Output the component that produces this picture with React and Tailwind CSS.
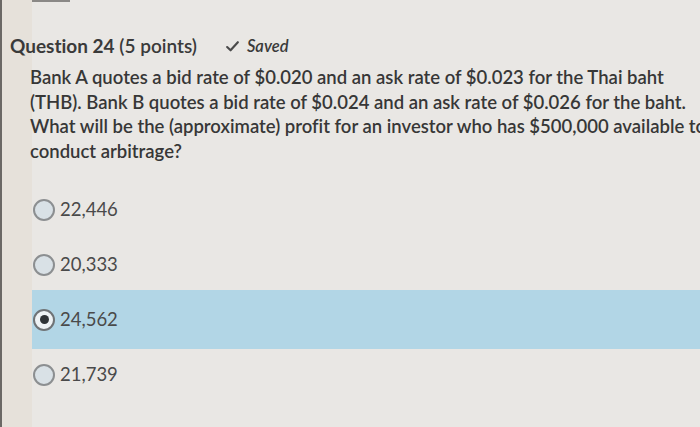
import React from 'react';

const options = [
  { label: '22,446', selected: false },
  { label: '20,333', selected: false },
  { label: '24,562', selected: true },
  { label: '21,739', selected: false },
];

function Radio({ selected }) {
  if (selected) {
    return (
      <span className="w-[22px] h-[22px] rounded-full border-2 border-[#6f7376] bg-[#eef2f4] flex items-center justify-center">
        <span className="w-[9px] h-[9px] rounded-full bg-[#2f3336]" />
      </span>
    );
  }
  return <span className="w-[22px] h-[22px] rounded-full border-2 border-[#8c8f91] bg-[#d9e1e6]" />;
}

export default function App() {
  return (
    <div className="w-[700px] h-[427px] overflow-hidden flex bg-[#e9e7e4] font-['Lato',sans-serif] text-[#363636] [font-variant-ligatures:none]">
      {/* left edge */}
      <div className="w-[2px] bg-[#6b6865]" />
      <div className="w-[30px] bg-[#e6e1da]" />

      <div className="flex-1 flex flex-col relative min-w-0">
        <div className="absolute top-0 left-0 w-[38px] h-[2px] bg-[#8a8886]" />

        {/* header */}
        <div className="flex items-center mt-[33px] ml-[-22px] h-[26px] whitespace-nowrap">
          <span className="text-[19px] font-bold text-[#3a3a3a]">
            Question 24 <span className="font-semibold">(5 points)</span>
          </span>
          <span className="ml-[28px] flex items-center gap-[7px] text-[#3a3a3a]">
            <svg width="15" height="13" viewBox="0 0 14 12" fill="none" stroke="#4a4a4a" strokeWidth="2" strokeLinecap="round" strokeLinejoin="round">
              <path d="M2 6.5 L5.2 9.5 L12 2" />
            </svg>
            <span className="text-[16.5px] italic font-semibold">Saved</span>
          </span>
        </div>

        {/* question */}
        <p className="mt-[6px] ml-[-2px] text-[18.5px] leading-[24.5px] font-semibold text-[#373737] whitespace-nowrap">
          Bank A quotes a bid rate of $0.020 and an ask rate of $0.023 for the Thai baht
          <br />
          (THB). Bank B quotes a bid rate of $0.024 and an ask rate of $0.026 for the baht.
          <br />
          What will be the (approximate) profit for an investor who has $500,000 available to
          <br />
          conduct arbitrage?
        </p>

        {/* options */}
        <div className="mt-[19px] flex flex-col">
          {options.map((o) => (
            <div
              key={o.label}
              className={`h-[55px] flex items-center gap-[5px] pl-[1px] ${o.selected ? 'bg-[#b2d6e6] h-[59px] mt-[-2px] mb-[-2px]' : ''}`}
            >
              <Radio selected={o.selected} />
              <span className="text-[18.5px] text-[#4a4a4a]">{o.label}</span>
            </div>
          ))}
        </div>
      </div>
    </div>
  );
}
